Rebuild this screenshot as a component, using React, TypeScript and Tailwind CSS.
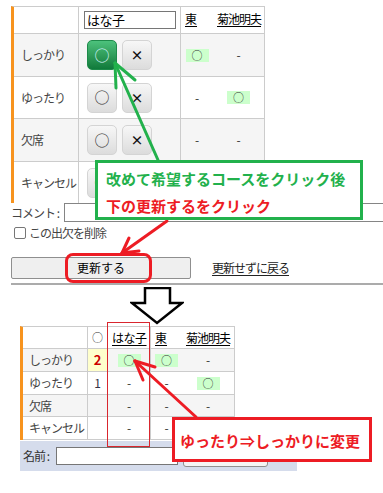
import React from "react";

type Val = "o" | "-" | "";

function Mark({ v }: { v: Val }) {
  if (v === "o")
    return (
      <span className="inline-block w-[23px] h-[13px] bg-[#ccffcc] text-center text-[11px] leading-[13px] text-[#333]">
        ○
      </span>
    );
  if (v === "-") return <span className="text-[12px] leading-[14px] text-[#333]">-</span>;
  return null;
}

const upperRows: {
  label: string;
  cls: string;
  green: boolean;
  dong: Val;
  kiku: Val;
}[] = [
  { label: "しっかり", cls: "h-[43px] bg-[#f5f5f5] border-b", green: true, dong: "o", kiku: "-" },
  { label: "ゆったり", cls: "h-[42px] bg-white border-b", green: false, dong: "-", kiku: "o" },
  { label: "欠席", cls: "h-[43px] bg-[#f5f5f5] border-b", green: false, dong: "-", kiku: "-" },
  { label: "キャンセル", cls: "h-[41px] bg-white", green: false, dong: "-", kiku: "-" },
];

const lowerRows: {
  label: string;
  cls: string;
  count: string;
  countCls: string;
  hana: Val;
  dong: Val;
  kiku: Val;
}[] = [
  {
    label: "しっかり",
    cls: "h-[23px] bg-[#f5f5f5]",
    count: "2",
    countCls: "bg-[#ffffcc] text-[#cc0000] font-bold text-[13px]",
    hana: "o",
    dong: "o",
    kiku: "-",
  },
  { label: "ゆったり", cls: "h-[23px] bg-white", count: "1", countCls: "text-[#334] text-[12px]", hana: "-", dong: "-", kiku: "o" },
  { label: "欠席", cls: "h-[22px] bg-[#f5f5f5]", count: "", countCls: "", hana: "-", dong: "-", kiku: "-" },
  { label: "キャンセル", cls: "h-[23px] bg-white", count: "", countCls: "", hana: "-", dong: "-", kiku: "-" },
];

function GrayBtn({ children }: { children: React.ReactNode }) {
  return (
    <div className="w-[30px] h-[30px] rounded-[5px] border border-[#d4d4d4] bg-linear-to-b from-[#f7f7f7] to-[#dcdcdc] flex items-center justify-center text-[#222]">
      {children}
    </div>
  );
}

export default function App() {
  return (
    <div className="relative w-[383px] h-[493px] overflow-hidden bg-white text-[#333] font-['Noto_Sans_CJK_JP','Noto_Sans',sans-serif]">
      {/* upper table */}
      <div className="ml-[11px] mt-[6px] w-[254px] border-t border-r border-[#cccccc] border-l-[3px] border-l-[#f7931e]">
        <div className="flex h-[27px] border-b border-[#cccccc] bg-white">
          <div className="w-[65px] border-r border-[#cccccc]" />
          <div className="w-[102px] border-r border-[#cccccc] flex items-center pl-[5px]">
            <div className="w-[92px] h-[18px] border border-[#767676] bg-white text-[13px] leading-[16px] pl-[2px] tracking-[-0.5px] text-black">
              はな子
            </div>
          </div>
          <div className="w-[32px] pl-[4px] pt-[4px] text-[12px] leading-[16px] underline underline-offset-[2px] text-black">
            東
          </div>
          <div className="flex-1 pl-[4px] pt-[4px] text-[12px] leading-[16px] underline underline-offset-[2px] tracking-[-1px] text-black whitespace-nowrap">
            菊池明夫
          </div>
        </div>
        {upperRows.map((r) => (
          <div key={r.label} className={`flex border-[#cccccc] ${r.cls}`}>
            <div className="w-[65px] border-r border-[#cccccc] flex items-center pl-[7px] text-[12px] tracking-[-1px] text-[#444] whitespace-nowrap">
              {r.label}
            </div>
            <div className="w-[102px] border-r border-[#cccccc] flex items-center pl-[8px] gap-[5px]">
              {r.green ? (
                <div className="w-[30px] h-[30px] rounded-[5px] border border-[#1e8a4a] bg-linear-to-b from-[#4cc27c] to-[#0f7a3b] flex items-center justify-center text-[15px] text-[#d8f4ff]">
                  ○
                </div>
              ) : (
                <GrayBtn>
                  <span className="text-[15px] text-[#333]">○</span>
                </GrayBtn>
              )}
              <GrayBtn>
                <span className="text-[13px] font-semibold text-[#111]">×</span>
              </GrayBtn>
            </div>
            <div className="w-[32px] flex items-center justify-center">
              <Mark v={r.dong} />
            </div>
            <div className="flex-1 flex items-center justify-center">
              <Mark v={r.kiku} />
            </div>
          </div>
        ))}
      </div>

      {/* comment */}
      <div className="flex items-center h-[19px]">
        <div className="w-[64px] shrink-0 pl-[11px] text-[12px] tracking-[-1px] text-[#444] leading-[19px] whitespace-nowrap">
          コメント :
        </div>
        <div className="w-[330px] h-[19px] border border-[#858585] bg-white shrink-0" />
      </div>

      {/* checkbox */}
      <div className="flex items-center h-[13px] mt-[4px]">
        <div className="ml-[14px] w-[12px] h-[12px] border border-[#767676] rounded-[2px] bg-white" />
        <span className="ml-[3px] text-[12px] tracking-[-1px] text-[#444] leading-[13px]">この出欠を削除</span>
      </div>

      {/* buttons */}
      <div className="flex items-center mt-[18px] h-[22px]">
        <div className="ml-[11px] w-[180px] h-[22px] border border-[#8f8f8f] rounded-[2px] bg-[#efefef] flex items-center justify-center text-[12px] text-black">
          更新する
        </div>
        <span className="ml-[21px] text-[12px] tracking-[-1px] underline underline-offset-[2px] text-[#222]">更新せずに戻る</span>
      </div>

      {/* hr */}
      <div className="mt-[4px] ml-[11px] h-[2px] bg-[#ababab]" />

      {/* down arrow */}
      <svg className="block mt-[2px] ml-[130px]" width="54" height="38" viewBox="0 0 54 38">
        <polygon
          points="15,1 40,1 40,16 52,16 27,36 2,16 15,16"
          fill="white"
          stroke="black"
          strokeWidth="2.5"
          strokeLinejoin="miter"
        />
      </svg>

      {/* lower table */}
      <div className="mt-[1px] ml-[20px] w-[215px] border-t border-r border-[#cccccc] border-l-[3px] border-l-[#f7931e]">
        <div className="flex h-[22px] border-b border-[#cccccc] bg-white text-[12px]">
          <div className="w-[65px] border-r border-[#cccccc]" />
          <div className="w-[20px] border-r border-[#cccccc] flex items-center justify-center text-[11px] text-[#333]">○</div>
          <div className="w-[43px] border-r border-[#cccccc] flex items-center pl-[4px]">
            <span className="underline underline-offset-[2px] tracking-[-0.5px] text-black">はな子</span>
          </div>
          <div className="w-[31px] flex items-center pl-[4px]">
            <span className="underline underline-offset-[2px] text-black">東</span>
          </div>
          <div className="flex-1 flex items-center pl-[4px]">
            <span className="underline underline-offset-[2px] tracking-[-1px] text-black whitespace-nowrap">菊池明夫</span>
          </div>
        </div>
        {lowerRows.map((r) => (
          <div key={r.label} className={`flex border-b border-[#cccccc] ${r.cls}`}>
            <div className="w-[65px] border-r border-[#cccccc] flex items-center pl-[6px] text-[12px] tracking-[-1px] text-[#444] whitespace-nowrap">
              {r.label}
            </div>
            <div className={`w-[20px] border-r border-[#cccccc] flex items-center justify-center ${r.countCls}`}>{r.count}</div>
            <div className="w-[43px] border-r border-[#cccccc] flex items-center justify-center">
              <Mark v={r.hana} />
            </div>
            <div className="w-[31px] flex items-center justify-center">
              <Mark v={r.dong} />
            </div>
            <div className="flex-1 flex items-center justify-center">
              <Mark v={r.kiku} />
            </div>
          </div>
        ))}
      </div>

      {/* name form */}
      <div className="mt-[1px] ml-[20px] w-[277px] h-[30px] bg-[#d5dcec] flex items-center">
        <span className="pl-[3px] w-[36px] shrink-0 text-[12px] tracking-[-1px] text-[#333] whitespace-nowrap">名前 :</span>
        <div className="w-[122px] h-[18px] border border-[#767676] bg-white" />
        <div className="ml-[5px] w-[85px] h-[21px] border border-[#8f8f8f] rounded-[3px] bg-[#f4f4f4]" />
      </div>

      {/* annotation arrows */}
      <svg className="absolute left-0 top-0 pointer-events-none" width="383" height="493" viewBox="0 0 383 493">
        <g stroke="#22b14c" strokeWidth="3" strokeLinecap="round" fill="none">
          <line x1="158" y1="160" x2="115" y2="63" />
          <line x1="115" y1="63" x2="135" y2="80" />
          <line x1="115" y1="63" x2="116" y2="88" />
        </g>
        <g stroke="#ed1c24" strokeWidth="3" strokeLinecap="round" fill="none">
          <line x1="167" y1="221" x2="122" y2="253" />
          <line x1="122" y1="253" x2="139" y2="251" />
          <line x1="122" y1="253" x2="129" y2="238" />
          <line x1="196" y1="417" x2="135" y2="361" />
          <line x1="135" y1="361" x2="143" y2="380" />
          <line x1="135" y1="361" x2="155" y2="367" />
        </g>
      </svg>

      {/* red rounded highlight around update button text */}
      <div className="absolute left-[65px] top-[253px] w-[87px] h-[30px] border-[3px] border-[#ed1c24] rounded-[8px]" />

      {/* red column highlight */}
      <div className="absolute left-[107px] top-[322px] w-[43px] h-[125px] border border-[#d9262e]" />

      {/* green callout */}
      <div className="absolute left-[95px] top-[160px] w-[268px] h-[60px] border-[3px] border-[#22b14c] bg-white pl-[8px] pt-[2px] text-[15px] font-bold leading-[27px]">
        <div className="text-[#22b14c] whitespace-nowrap">改めて希望するコースをクリック後</div>
        <div className="text-[#ed1c24] whitespace-nowrap">下の更新するをクリック</div>
      </div>

      {/* red callout */}
      <div className="absolute left-[172px] top-[417px] w-[200px] h-[45px] border-[3px] border-[#ed1c24] bg-white pl-[5px] pt-[3px] flex items-center text-[15px] font-bold text-[#ed1c24] whitespace-nowrap">
        ゆったり⇒しっかりに変更
      </div>
    </div>
  );
}
